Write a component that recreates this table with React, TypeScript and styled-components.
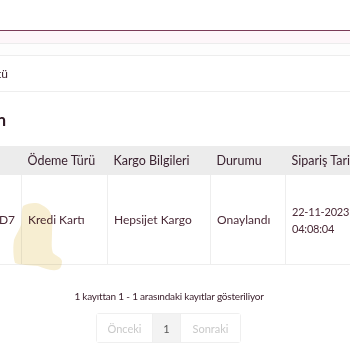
import styled, { createGlobalStyle } from 'styled-components'

const GlobalStyle = createGlobalStyle`
  html, body {
    margin: 0;
    padding: 0;
    background: #ffffff;
    overflow: hidden;
  }
  body {
    font-family: Lato, "Noto Sans", sans-serif;
    color: #4a2a37;
  }
`

const Page = styled.div`
  position: relative;
  width: 350px;
  height: 350px;
  overflow: hidden;
  padding-top: 30px;
  box-sizing: border-box;
`

const TopBar = styled.div`
  height: 12px;
  border-top: 1px solid #7a3b57;
  border-bottom: 1px solid #ececec;
  background: #fdf6f9;
`

const Strip = styled.div`
  height: 11px;
  border-bottom: 1px solid #ededed;
  background: #fdfdfd;
`

const Row = styled.div`
  height: 35px;
  display: flex;
  align-items: center;
  border-bottom: 1px solid #eeeeee;
`

// the page is scrolled sideways: show only the tail of the text
const Tail = styled.div<{ $w: number }>`
  width: ${(p) => p.$w}px;
  overflow: hidden;
  direction: rtl;
  white-space: nowrap;

  span {
    direction: ltr;
    unicode-bidi: isolate;
  }
`

const RowText = styled.div`
  font-size: 12px;
  color: #3e2430;
`

const Title = styled.div`
  height: 54px;
  display: flex;
  align-items: center;
  font-size: 17px;
  font-weight: 700;
  color: #2f1a24;
`

const TableWrap = styled.div`
  overflow: hidden;
`

const Table = styled.table`
  border-collapse: collapse;
  width: 420px;
  font-size: 12px;

  th {
    background: #ececec;
    height: 29px;
    padding: 0 6px;
    text-align: left;
    font-weight: 400;
    font-size: 12.5px;
    color: #3a2230;
    white-space: nowrap;
  }

  td {
    height: 89px;
    padding: 0 6px;
    border-left: 1px solid #eeeeee;
    border-bottom: 1px solid #eeeeee;
    color: #4a2a37;
    white-space: nowrap;
    line-height: 17px;
  }

  th:first-child,
  td:first-child {
    width: 15px;
    padding: 0 6px 0 0;
    border-left: none;
  }
`

const DateCell = styled.td`
  font-size: 11px;
  letter-spacing: -0.2px;
`

const Info = styled.div`
  margin-top: 25px;
  padding-right: 12px;
  text-align: center;
  font-size: 10px;
  letter-spacing: -0.2px;
  color: #3e2430;
`

const Pager = styled.div`
  margin: 11px 0 0 96px;
  display: inline-flex;
  border: 1px solid #efefef;
  border-radius: 3px;
  height: 28px;
`

const PageBtn = styled.div<{ $active?: boolean; $w: number }>`
  width: ${(p) => p.$w}px;
  display: flex;
  align-items: center;
  justify-content: center;
  font-size: 11px;
  color: ${(p) => (p.$active ? '#555' : '#c9c9c9')};
  background: ${(p) => (p.$active ? '#f3f3f3' : '#fff')};
  & + & {
    border-left: 1px solid #efefef;
  }
`

const Blob = styled.svg`
  position: absolute;
  left: 10px;
  top: 201px;
  pointer-events: none;
  mix-blend-mode: multiply;
`

export default function App() {
  return (
    <Page>
      <GlobalStyle />
      <TopBar />
      <Strip />
      <Row>
        <RowText>
          <Tail $w={8}>
            <span>Sipariş Özetü</span>
          </Tail>
        </RowText>
      </Row>
      <Title>
        <Tail $w={6}>
          <span>Ürün</span>
        </Tail>
      </Title>

      <TableWrap>
        <Table>
          <thead>
            <tr>
              <th></th>
              <th style={{ width: 74 }}>Ödeme Türü</th>
              <th style={{ width: 91 }}>Kargo Bilgileri</th>
              <th style={{ width: 63 }}>Durumu</th>
              <th>Sipariş Tarihi</th>
            </tr>
          </thead>
          <tbody>
            <tr>
              <td>
                <Tail $w={15}>
                  <span>#A3C9FD7</span>
                </Tail>
              </td>
              <td>Kredi Kartı</td>
              <td>Hepsijet Kargo</td>
              <td>Onaylandı</td>
              <DateCell>
                22-11-2023
                <br />
                04:08:04
              </DateCell>
            </tr>
          </tbody>
        </Table>
      </TableWrap>

      <Info>1 kayıttan 1 - 1 arasındaki kayıtlar gösteriliyor</Info>
      <Pager>
        <PageBtn $w={55}>Önceki</PageBtn>
        <PageBtn $w={27} $active>
          1
        </PageBtn>
        <PageBtn $w={59}>Sonraki</PageBtn>
      </Pager>

      <Blob width="56" height="72" viewBox="0 0 56 72">
        <path
          d="M13 5 C18 2 26 1 30 3 C36 6 40 9 41 14 C43 20 42 26 42 32 C42 40 41 46 43 52 C46 55 51 56 52 60 C52 65 50 69 46 69 C40 70 34 67 28 65 C20 64 10 64 5 62 C3 55 3 45 4 39 C6 33 9 30 11 24 C12 17 11 10 13 5 Z"
          fill="#f6eccd"
          opacity="0.9"
        />
      </Blob>
    </Page>
  )
}
